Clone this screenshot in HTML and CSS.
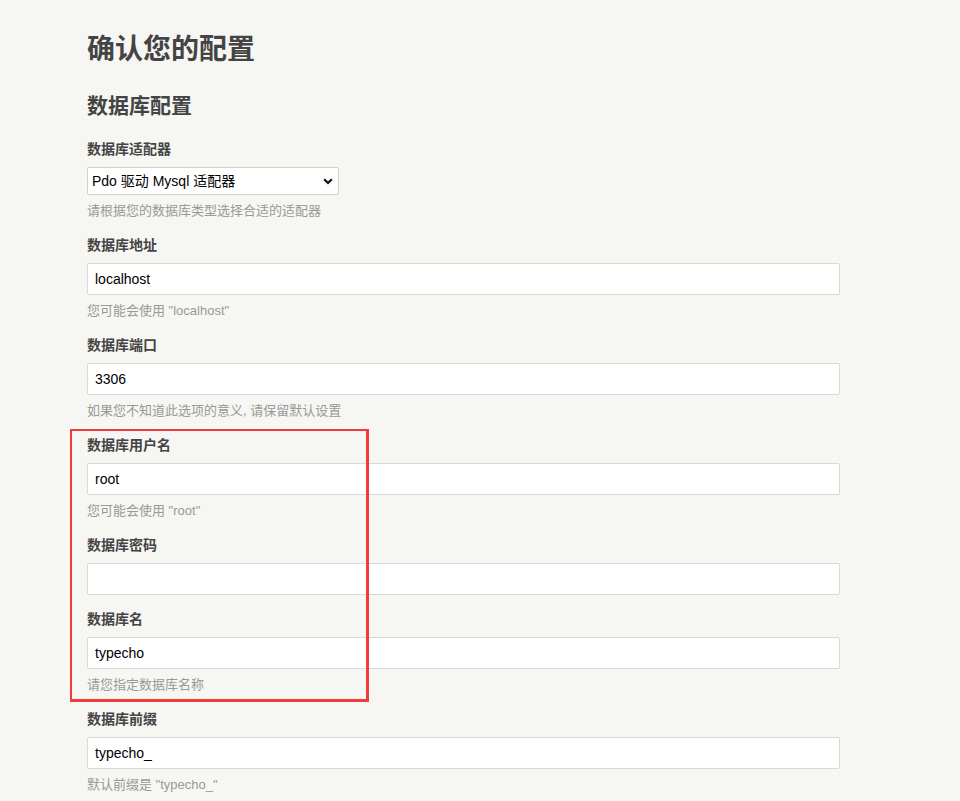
FILE: index.html
```html
<!DOCTYPE html>
<html lang="zh-CN">
<head>
<meta charset="utf-8">
<title>确认您的配置</title>
<link rel="stylesheet" href="styles.css">
</head>
<body>
<main class="page">
  <h1 class="title">确认您的配置</h1>
  <h2 class="subtitle">数据库配置</h2>
  <div class="field">
    <label class="label">数据库适配器</label>
    <div class="select-wrap">
      <select class="select"><option>Pdo 驱动 Mysql 适配器</option></select>
      <svg class="chev" width="10" height="7" viewBox="0 0 10 7"><path d="M1.2 1.2 L5 5 L8.8 1.2" fill="none" stroke="#111" stroke-width="2.2"/></svg>
    </div>
    <p class="desc">请根据您的数据库类型选择合适的适配器</p>
  </div>
  <div class="field">
    <label class="label">数据库地址</label>
    <input class="input" type="text" value="localhost">
    <p class="desc">您可能会使用 "localhost"</p>
  </div>
  <div class="field">
    <label class="label">数据库端口</label>
    <input class="input" type="text" value="3306">
    <p class="desc">如果您不知道此选项的意义, 请保留默认设置</p>
  </div>
  <div class="field">
    <label class="label">数据库用户名</label>
    <input class="input" type="text" value="root">
    <p class="desc">您可能会使用 "root"</p>
  </div>
  <div class="field">
    <label class="label">数据库密码</label>
    <input class="input" type="password" value="">
  </div>
  <div class="field">
    <label class="label">数据库名</label>
    <input class="input" type="text" value="typecho">
    <p class="desc">请您指定数据库名称</p>
  </div>
  <div class="field">
    <label class="label">数据库前缀</label>
    <input class="input" type="text" value="typecho_">
    <p class="desc">默认前缀是 "typecho_"</p>
  </div>
  <div class="highlight"></div>
</main>
</body>
</html>
```
FILE: styles.css
```css
html, body {
  margin: 0;
  padding: 0;
  background: #f6f6f3;
}
body {
  font-family: "Liberation Sans", "Noto Sans CJK SC", sans-serif;
  color: #444;
  height: 801px;
  overflow: hidden;
}
.page {
  position: relative;
  padding: 30px 0 0 87px;
  width: 753px;
}
.title {
  margin: 0;
  font-size: 28px;
  line-height: 40px;
  font-weight: bold;
  color: #444;
}
.subtitle {
  margin: 21px 0 0;
  font-size: 21px;
  line-height: 30px;
  font-weight: bold;
  color: #444;
}
.field {
  display: flex;
  flex-direction: column;
  align-items: flex-start;
  margin-top: 18px;
  margin-bottom: -4px;
}
.field + .field {
  margin-top: 18px;
}
.label {
  display: block;
  font-size: 14px;
  line-height: 20px;
  font-weight: bold;
  color: #444;
  margin-bottom: 8px;
}
.select-wrap {
  position: relative;
  width: 252px;
  height: 28px;
}
.select {
  appearance: none;
  -webkit-appearance: none;
  box-sizing: border-box;
  width: 252px;
  height: 28px;
  margin: 0;
  padding: 0 24px 0 4px;
  border: 1px solid #d0d0cd;
  border-radius: 2px;
  background: #fff;
  font-family: "Liberation Sans", "Noto Sans CJK SC", sans-serif;
  font-size: 14px;
  color: #000;
}
.chev {
  position: absolute;
  right: 6px;
  top: 11px;
  pointer-events: none;
}
.input {
  box-sizing: border-box;
  width: 753px;
  height: 32px;
  margin: 0;
  padding: 0 7px;
  border: 1px solid #d9d9d6;
  border-radius: 2px;
  background: #fff;
  font-family: "Liberation Sans", "Noto Sans CJK SC", sans-serif;
  font-size: 14px;
  color: #000;
  outline: none;
}
.desc {
  margin: 6px 0 0;
  font-size: 13px;
  line-height: 20px;
  color: #999;
}
.highlight {
  position: absolute;
  left: 70px;
  top: 429px;
  width: 299px;
  height: 273px;
  box-sizing: border-box;
  border-style: solid;
  border-color: #f23c3c;
  border-width: 2px 3px 3px 2px;
  pointer-events: none;
}
```
